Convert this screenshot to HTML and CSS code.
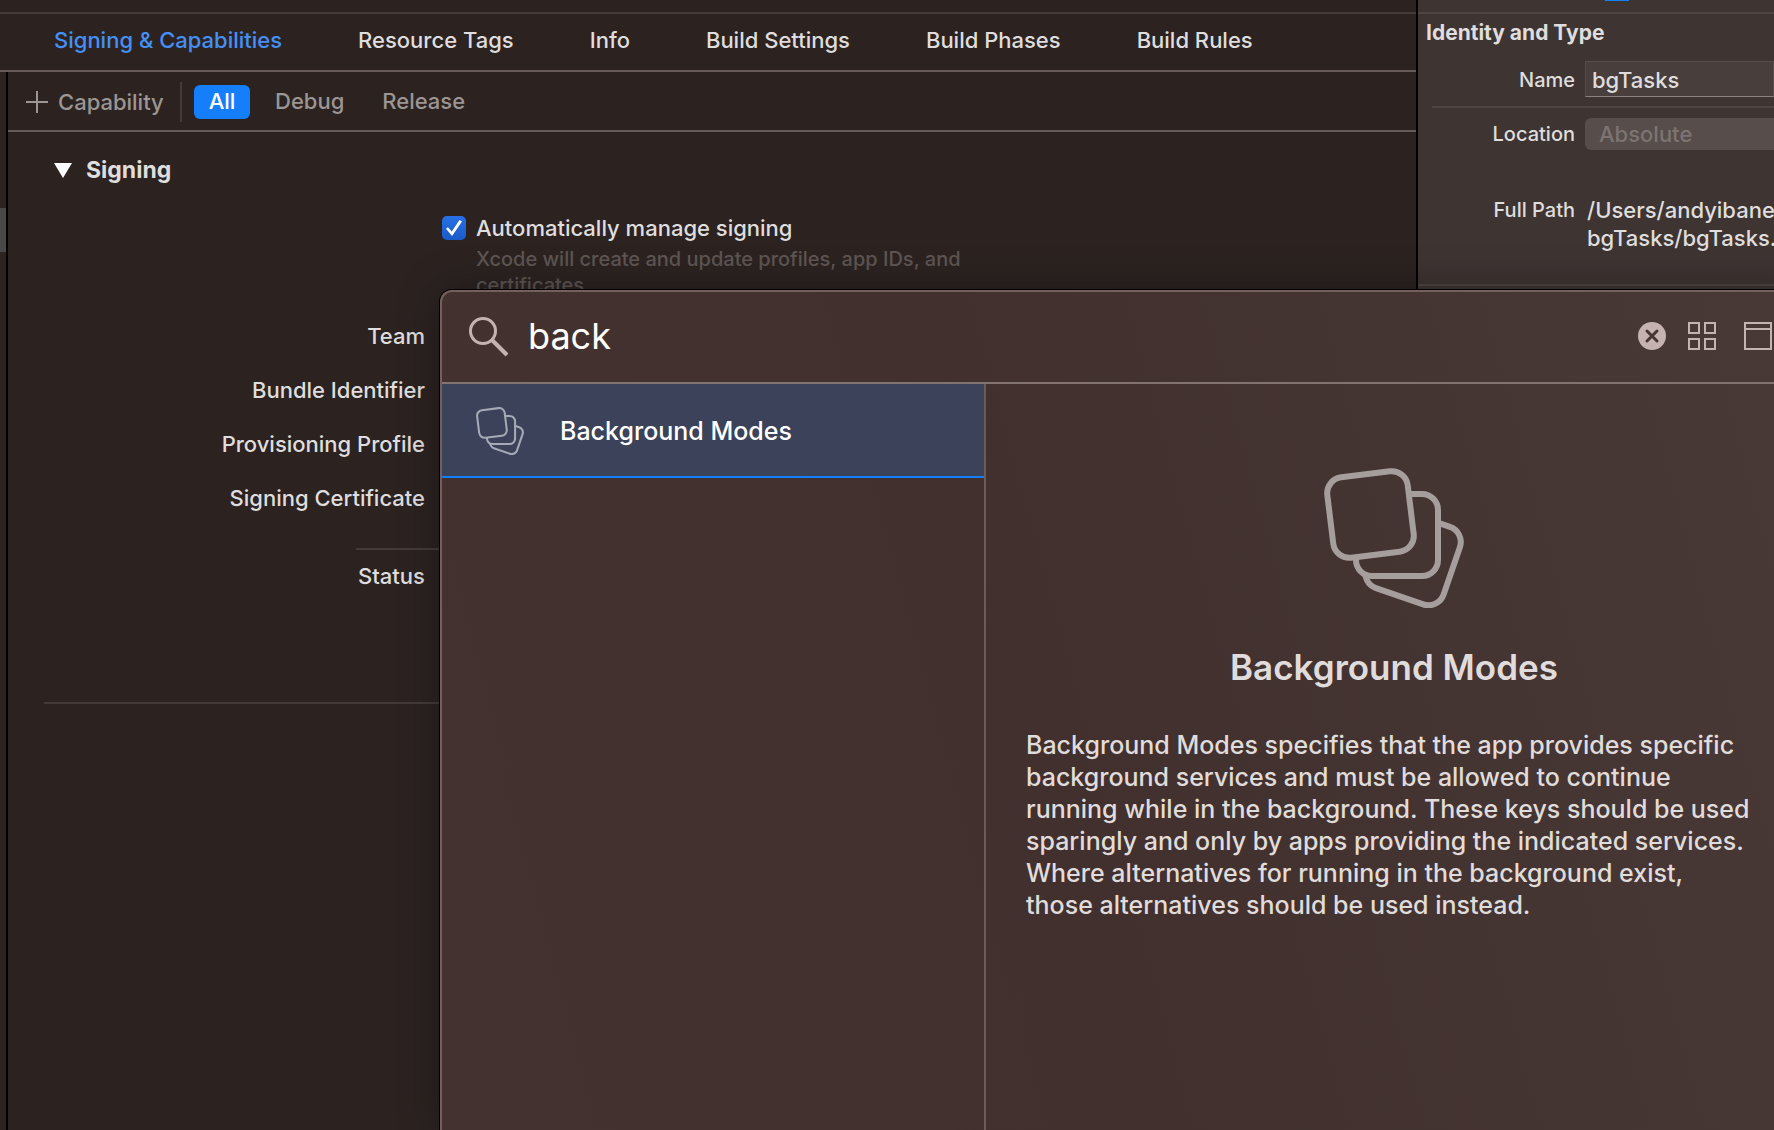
FILE: index.html
```html
<!DOCTYPE html>
<html lang="en">
<head>
<meta charset="utf-8">
<title>bgTasks: Signing &amp; Capabilities</title>
<link rel="stylesheet" href="styles.css">
</head>
<body>
<svg class="defs" aria-hidden="true">
  <defs>
    <mask id="behind-front" maskUnits="userSpaceOnUse" x="0" y="0" width="220" height="190">
      <rect width="220" height="190" fill="#fff"/>
      <rect x="50" y="34" width="81" height="81" rx="16" transform="rotate(-7 90.5 74.5)" fill="#000"/>
    </mask>
    <mask id="behind-middle" maskUnits="userSpaceOnUse" x="0" y="0" width="220" height="190">
      <rect width="220" height="190" fill="#fff"/>
      <rect x="50" y="34" width="81" height="81" rx="16" transform="rotate(-7 90.5 74.5)" fill="#000"/>
      <rect x="76" y="54" width="82" height="82" rx="16" fill="#000"/>
    </mask>
    <symbol id="stack" viewBox="44 28 140 140">
      <g fill="none" stroke="currentColor" stroke-width="6">
        <g mask="url(#behind-middle)"><rect x="92" y="76.500" width="82" height="82" rx="16" transform="rotate(19 133 117.500)"/></g>
        <g mask="url(#behind-front)"><rect x="76" y="54" width="82" height="82" rx="16"/></g>
        <rect x="50" y="34" width="81" height="81" rx="16" transform="rotate(-7 90.500 74.500)"/>
      </g>
    </symbol>
  </defs>
</svg>

<div class="window">
  <main class="editor">
    <nav class="tabs">
      <a class="tab tab-current" href="#signing">Signing &amp; Capabilities</a>
      <a class="tab" href="#tags">Resource Tags</a>
      <a class="tab" href="#info">Info</a>
      <a class="tab" href="#settings">Build Settings</a>
      <a class="tab" href="#phases">Build Phases</a>
      <a class="tab" href="#rules">Build Rules</a>
    </nav>
    <div class="editor-body">
      <div class="gutter"><div class="gutter-selection"></div></div>
      <div class="content">
        <div class="toolbar">
          <button class="add" type="button">
            <svg width="22" height="22" viewBox="0 0 22 22" aria-hidden="true"><path d="M11 0V22M0 11H22" stroke="currentColor" stroke-width="2"/></svg>
            Capability
          </button>
          <div class="divider"></div>
          <button class="scope scope-on" type="button">All</button>
          <button class="scope" type="button">Debug</button>
          <button class="scope" type="button">Release</button>
        </div>
        <section class="signing">
          <h2 class="section-title">
            <svg width="18" height="15" viewBox="0 0 18 15" aria-hidden="true"><path d="M0 0H18L9 15Z" fill="#fff"/></svg>
            Signing
          </h2>
          <div class="auto">
            <input class="tick" type="checkbox" id="auto" checked>
            <div class="auto-text">
              <label for="auto">Automatically manage signing</label>
              <p class="hint">Xcode will create and update profiles, app IDs, and certificates.</p>
            </div>
          </div>
          <div class="rows">
            <div class="row">Team</div>
            <div class="row">Bundle Identifier</div>
            <div class="row">Provisioning Profile</div>
            <div class="row">Signing Certificate</div>
          </div>
          <div class="row-status">Status</div>
        </section>
      </div>
    </div>
  </main>

  <aside class="inspector">
    <div class="inspector-bar"><div class="inspector-mark"></div></div>
    <h2 class="inspector-title">Identity and Type</h2>
    <div class="field field-name">
      <label class="field-label" for="name">Name</label>
      <input class="name" id="name" type="text" value="bgTasks">
    </div>
    <div class="field field-location">
      <label class="field-label" for="location">Location</label>
      <select class="location" id="location" disabled><option>Absolute</option></select>
    </div>
    <div class="field field-path">
      <span class="field-label">Full Path</span>
      <span class="path">/Users/andyibanez<br>bgTasks/bgTasks.</span>
    </div>
  </aside>

  <div class="library" role="dialog" aria-label="Capabilities">
    <div class="search">
      <svg class="glass" width="42" height="42" viewBox="0 0 42 42" aria-hidden="true"><g fill="none" stroke="currentColor"><circle cx="15" cy="16" r="12.500" stroke-width="3"/><path d="M24 25L39 40" stroke-width="4"/></g></svg>
      <input class="query" type="text" value="back" aria-label="Search capabilities">
      <div class="tools">
        <button class="tool" type="button" aria-label="Clear">
          <svg width="28" height="28" viewBox="0 0 28 28"><circle cx="14" cy="14" r="14" fill="currentColor"/><path d="M9 9L19 19M19 9L9 19" stroke="#463633" stroke-width="3" stroke-linecap="round"/></svg>
        </button>
        <button class="tool" type="button" aria-label="Grid view">
          <svg width="28" height="28" viewBox="0 0 28 28"><path d="M1 1H11V11H1ZM17 1H27V11H17ZM1 17H11V27H1ZM17 17H27V27H17Z" fill="none" stroke="currentColor" stroke-width="2"/></svg>
        </button>
      </div>
      <button class="tool" type="button" aria-label="Detail view">
        <svg width="28" height="28" viewBox="0 0 28 28"><path d="M1 1H27V27H1ZM1 7H27" fill="none" stroke="currentColor" stroke-width="2"/></svg>
      </button>
    </div>
    <div class="results">
      <div class="list">
        <button class="item" type="button">
          <svg width="48" height="48" aria-hidden="true"><use href="#stack"/></svg>
          Background Modes
        </button>
      </div>
      <article class="detail">
        <svg class="detail-icon" width="140" height="140" aria-hidden="true"><use href="#stack"/></svg>
        <h1 class="detail-title">Background Modes</h1>
        <p class="detail-text">Background Modes specifies that the app provides specific background services and must be allowed to continue running while in the background. These keys should be used sparingly and only by apps providing the indicated services. Where alternatives for running in the background exist, those alternatives should be used instead.</p>
      </article>
    </div>
  </div>
</div>
</body>
</html>
```
FILE: styles.css
```css
* { box-sizing: border-box; }

body {
  margin: 0;
  background: #2c2321;
  color: #dfdddd;
  font-family: Inter, "Liberation Sans", sans-serif;
  font-size: 22px;
  font-weight: 500;
  line-height: 28px;
}

button, input, select { font: inherit; color: inherit; margin: 0; padding: 0; border: 0; background: none; }
h1, h2, p { margin: 0; }
svg { display: block; flex: none; }

.defs { position: absolute; width: 0; height: 0; }

.window { position: relative; display: flex; height: 100vh; overflow: hidden; }

.editor { flex: 1; min-width: 0; display: flex; flex-direction: column; padding-top: 12px; }

.tabs {
  display: flex;
  align-items: center;
  gap: 76px;
  height: 60px;
  padding: 0 54px 4px;
  border-top: 2px solid #443b39;
  border-bottom: 2px solid #665b59;
  white-space: nowrap;
}
.tab { color: inherit; text-decoration: none; }
.tab-current { color: #4490f7; }

.editor-body { flex: 1; display: flex; }
.gutter { width: 8px; padding-top: 136px; border-right: 2px solid #000; }
.gutter-selection { height: 44px; background: #484847; }
.content { flex: 1; min-width: 0; }

.toolbar { display: flex; align-items: center; height: 60px; padding: 2px 18px 0; border-bottom: 2px solid #665b59; color: #9b9594; }
.add { display: flex; align-items: center; gap: 10px; width: 154px; }
.divider { width: 2px; height: 40px; margin-right: 12px; background: #443b39; }
.scope { height: 34px; margin-right: 12px; padding: 0 13px 2px; border-radius: 6px; }
.scope-on { width: 56px; background: #157efb; color: #fff; }

.signing { margin-left: 36px; height: 572px; border-bottom: 2px solid #443b39; }
.section-title { display: flex; align-items: center; gap: 14px; padding: 24px 0 0 10px; font-size: 23px; font-weight: 700; }

.auto { display: flex; gap: 10px; padding: 30px 0 0 398px; }
.tick {
  appearance: none;
  display: grid;
  place-items: center;
  width: 24px;
  height: 24px;
  margin-top: 2px;
  border-radius: 5px;
  background: linear-gradient(#2770e6, #1a5bc9);
}
.tick:checked::before {
  content: "";
  width: 16px;
  height: 16px;
  background: #fff;
  clip-path: polygon(0 55%, 12% 45%, 36% 72%, 84% 0, 100% 10%, 38% 100%);
}
.auto-text { width: 520px; }
.hint { padding-top: 4px; font-size: 20px; line-height: 26px; color: #5e5553; }

.rows { display: grid; grid-auto-rows: 28px; gap: 26px; padding-top: 24px; }
.row { width: 381px; text-align: right; }
.row-status { margin: 36px 0 0 312px; padding: 12px 0 0 2px; border-top: 2px solid #443b39; }

.inspector { width: 358px; border-left: 2px solid #000; background: #3e3432; font-size: 20px; }
.inspector-bar { height: 14px; border-bottom: 2px solid #4e4543; }
.inspector-mark { width: 24px; height: 1px; margin-left: 187px; background: #157efb; }
.inspector-title { padding: 5px 8px 0; font-size: 21px; line-height: 28px; font-weight: 700; }
.field { display: flex; gap: 10px; }
.field-label { width: 157px; text-align: right; flex: none; }
.field-name { align-items: center; padding: 14px 0 9px; }
.field-name .field-label { padding-top: 2px; }
.name {
  flex: 1;
  min-width: 0;
  height: 36px;
  padding: 2px 0 0 6px;
  border: 1px solid #564c4a;
  border-bottom-color: #8a8280;
  background: #483e3c;
  font-size: 22px;
}
.field-location { align-items: center; margin-left: 14px; padding-top: 10px; border-top: 2px solid #4e4543; }
.field-location .field-label { width: 143px; }
.location {
  appearance: none;
  flex: 1;
  min-width: 0;
  height: 32px;
  padding-left: 14px;
  border-radius: 6px 0 0 6px;
  background: #574d4b;
  color: #7d7472;
  font-size: 22px;
  opacity: 1;
}
.field-path { gap: 12px; margin-top: 46px; padding-bottom: 32px; border-bottom: 2px solid #4e4543; white-space: nowrap; }
.path { font-size: 22px; }

.library {
  position: absolute;
  top: 290px;
  left: 440px;
  right: -28px;
  bottom: 0;
  display: flex;
  flex-direction: column;
  border: 2px solid #75605d;
  border-width: 2px 0 0 2px;
  border-radius: 12px 0 0 0;
  background: linear-gradient(75deg, #43322f, #41302d 45%, #483937);
  box-shadow: 0 0 0 1px #000, 0 0 40px rgba(0, 0, 0, 0.35);
}
.search { display: flex; align-items: center; gap: 18px; height: 92px; padding: 0 30px 2px 26px; border-bottom: 2px solid #837370; color: #c4b3b0; }
.query { flex: 1; min-width: 0; height: 56px; color: #fff; font-size: 36px; font-weight: 400; outline: 0; }
.tools { display: flex; gap: 22px; margin-right: 10px; }
.tool { width: 28px; height: 28px; }

.results { flex: 1; display: flex; }
.list { width: 544px; border-right: 2px solid #6c5b59; }
.item {
  display: flex;
  align-items: center;
  gap: 36px;
  width: 100%;
  height: 94px;
  padding: 2px 34px 0;
  border-bottom: 2px solid #157efb;
  background: #3b4259;
  color: #fff;
  font-size: 25px;
}
.item svg { color: #a5aab6; }
.detail { flex: 1; padding: 84px 40px 0; color: #e0dcdb; }
.detail-icon { margin: 0 auto; color: #a69e9c; }
.detail-title { margin-top: 36px; font-size: 35px; line-height: 46px; font-weight: 600; text-align: center; }
.detail-text { margin-top: 39px; padding-right: 10px; font-size: 25px; line-height: 32px; }
```
